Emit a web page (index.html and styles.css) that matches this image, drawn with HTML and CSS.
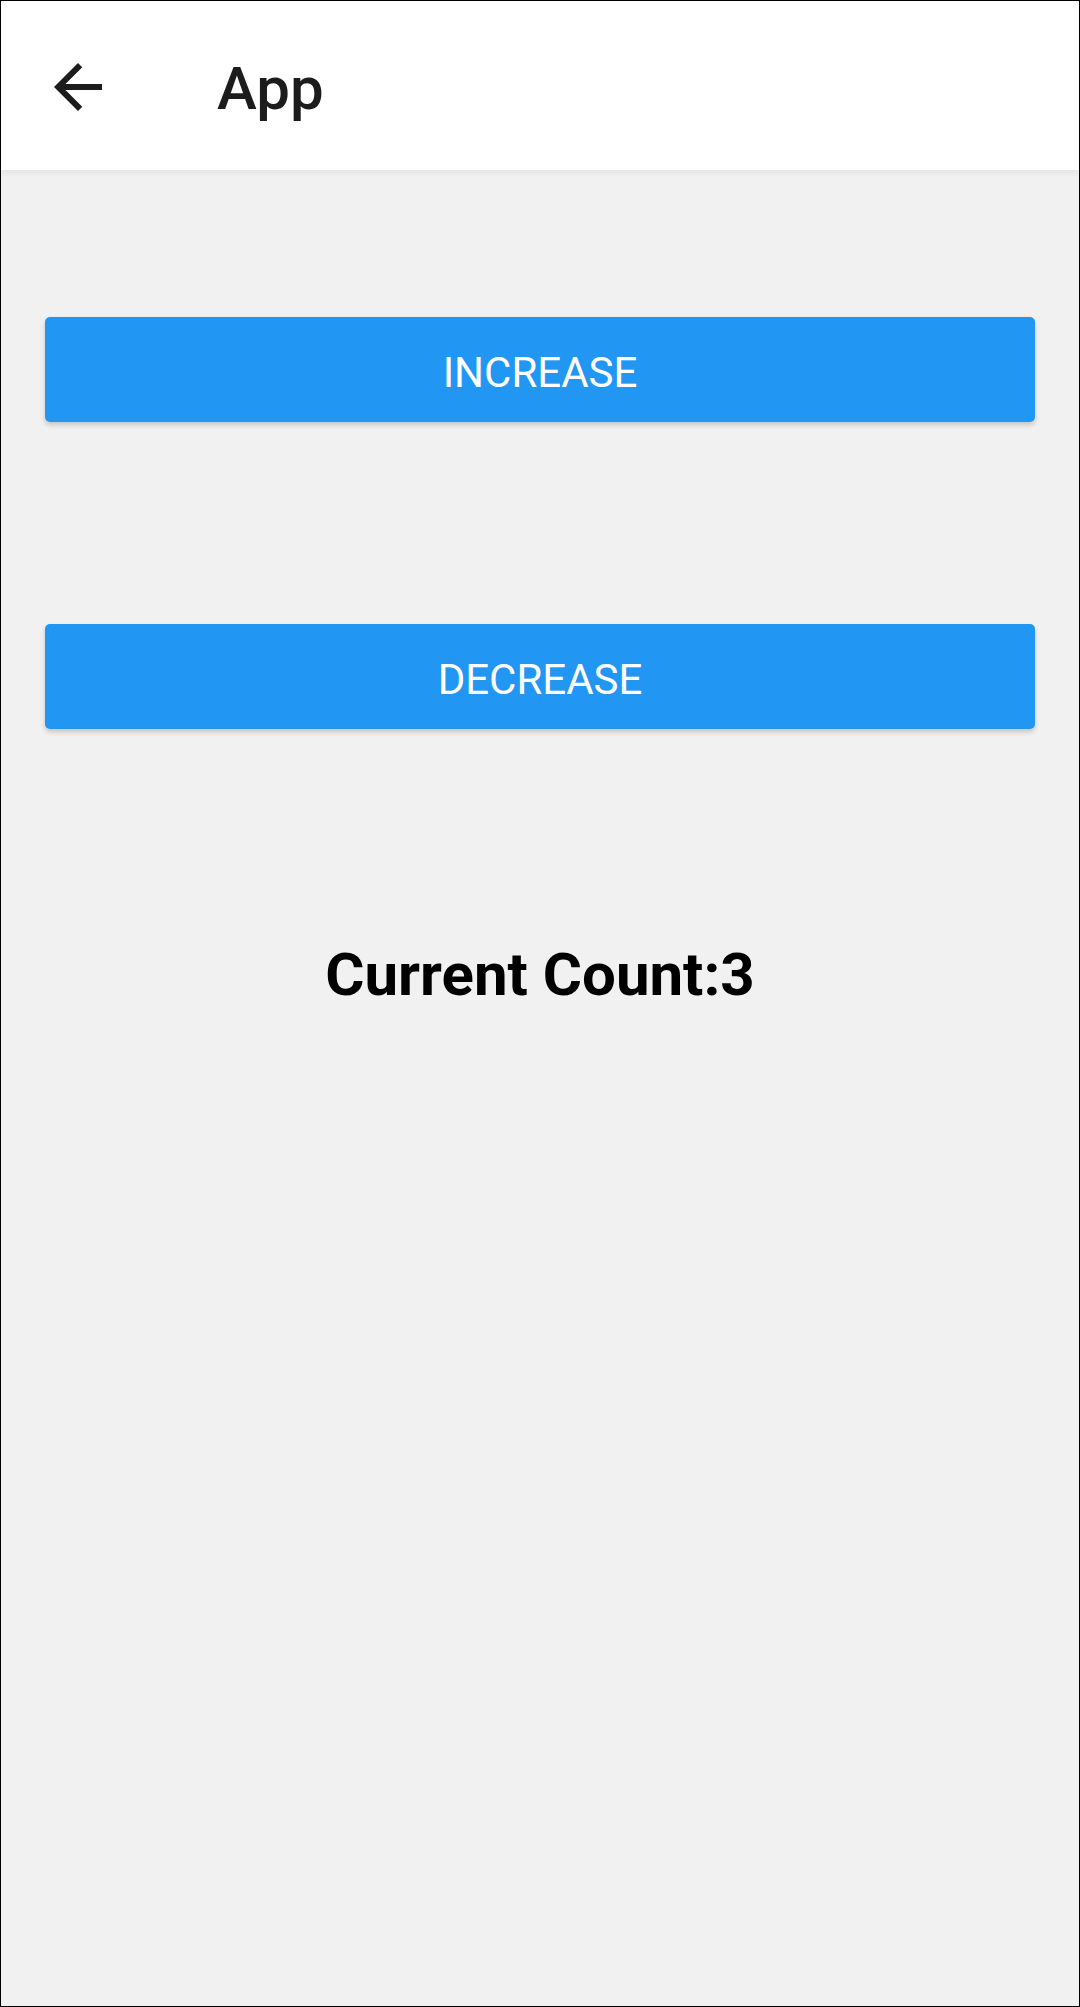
FILE: index.html
```html
<!DOCTYPE html>
<html>
<head>
<meta charset="utf-8">
<link rel="stylesheet" href="styles.css">
</head>
<body>
<div class="screen">
  <header class="appbar">
    <svg class="back" viewBox="0 0 24 24" width="72" height="72"><path d="M20 11H7.83l5.59-5.59L12 4l-8 8 8 8 1.41-1.41L7.83 13H20v-2z" fill="#1c1c1c"/></svg>
    <h1 class="title">App</h1>
  </header>
  <main class="content">
    <button class="btn btn-first">INCREASE</button>
    <button class="btn btn-second">DECREASE</button>
    <p class="count">Current Count:3</p>
  </main>
</div>
</body>
</html>
```
FILE: styles.css
```css
* { box-sizing: border-box; }
html, body { margin: 0; padding: 0; }
body { font-family: Roboto, "Noto Sans", sans-serif; background: #f1f1f1; }
.screen {
  width: 1080px;
  height: 2007px;
  border: 1px solid #000;
  background: #f1f1f1;
  display: flex;
  flex-direction: column;
}
.appbar {
  height: 169px;
  background: #fff;
  display: flex;
  align-items: center;
  box-shadow: 0 3px 6px rgba(0,0,0,0.05);
  position: relative;
  z-index: 1;
}
.back { margin-left: 41px; margin-top: 2px; }
.title {
  margin: 0 0 0 103px;
  font-size: 60px;
  font-weight: 500;
  color: #1c1c1c;
  padding-top: 6px;
}
.content {
  display: flex;
  flex-direction: column;
  align-items: center;
  padding: 147px 44px 0 44px;
}
.btn {
  width: 100%;
  height: 105px;
  border: none;
  border-radius: 5px;
  background: #2196f3;
  color: #fff;
  font-family: Roboto, sans-serif;
  font-size: 42px;
  font-weight: 400;
  box-shadow: 0 3px 5px rgba(0,0,0,0.18);
  padding: 5px 0 0 0;
}
.btn-second { margin-top: 202px; }
.count {
  margin: 211px 0 0 0;
  font-size: 60px;
  font-weight: 700;
  color: #000;
  line-height: 70px;
}
```
